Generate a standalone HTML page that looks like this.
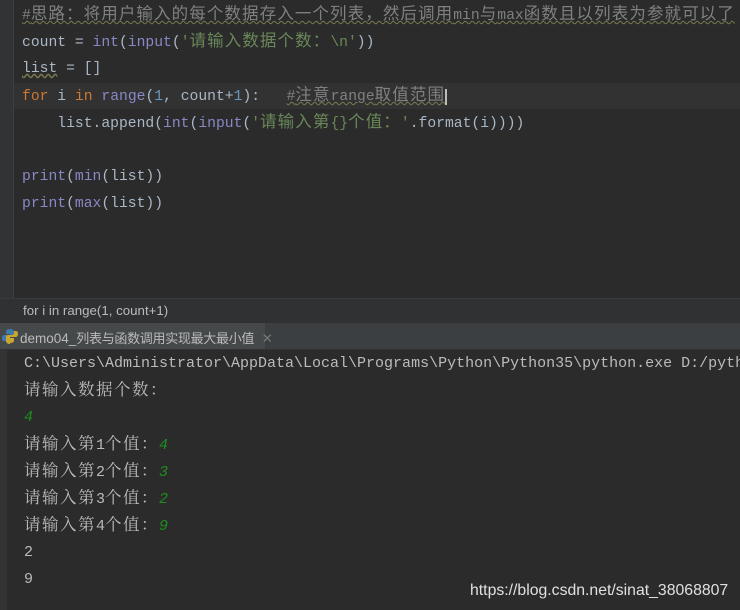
<!DOCTYPE html>
<html><head><meta charset="utf-8"><style>
body{margin:0;width:740px;height:610px;overflow:hidden;background:#2b2b2b;position:relative;font-family:"Liberation Mono","Noto Sans CJK SC",monospace}
.a{position:absolute;white-space:pre}
.code{font-size:14.7px;color:#a9b7c6;left:22px}
.z{font-size:16.5px;letter-spacing:1.1px}
.c{color:#808080;text-decoration:underline wavy #7a7a50;text-decoration-thickness:1px}
.k{color:#cc7832}.b{color:#8888c6}.s{color:#6a8759}.n{color:#6897bb}
.con{font-family:"Liberation Mono","Noto Serif CJK SC",monospace;font-size:15px;color:#bbbbbb;left:24px}
.con .z{font-size:16.5px;letter-spacing:1.5px}
.g{color:#1d8f1d;font-style:italic}
</style></head><body>
<div class="a" style="left:0;top:0;width:13px;height:298px;background:#313335;border-right:1px solid #3f3f3f"></div>
<div class="a" style="left:14px;top:83px;width:726px;height:26px;background:#323232"></div>
<div class="a code" style="top:5px;line-height:20px"><span class="c">#<span class="z">思路：将用户输入的每个数据存入一个列表，然后调用</span>min<span class="z">与</span>max<span class="z">函数且以列表为参就可以了</span></span></div>
<div class="a code" style="top:32px;line-height:20px">count = <span class="b">int</span>(<span class="b">input</span>(<span class="s">'<span class="z">请输入数据个数：</span>\n'</span>))</div>
<div class="a code" style="top:59px;line-height:20px"><span style="text-decoration:underline wavy #7a7a50">list</span> = []</div>
<div class="a code" style="top:86px;line-height:20px"><span class="k">for</span> i <span class="k">in</span> <span class="b">range</span>(<span class="n">1</span>, count+<span class="n">1</span>):   <span class="c">#<span class="z">注意</span>range<span class="z">取值范围</span></span><span style="border-left:2px solid #bbb"></span></div>
<div class="a code" style="top:113px;line-height:20px">    list.append(<span class="b">int</span>(<span class="b">input</span>(<span class="s">'<span class="z">请输入第</span>{}<span class="z">个值：</span>'</span>.format(i))))</div>
<div class="a code" style="top:167px;line-height:20px"><span class="b">print</span>(<span class="b">min</span>(list))</div>
<div class="a code" style="top:194px;line-height:20px"><span class="b">print</span>(<span class="b">max</span>(list))</div>
<div class="a" style="left:0;top:298px;width:740px;height:25px;background:#2f3133;border-top:1px solid #3a3a3a"></div>
<div class="a" style="left:23px;top:303px;font:13.3px 'Liberation Sans',sans-serif;color:#bbbbbb">for i in range(1, count+1)</div>
<div class="a" style="left:0;top:323px;width:740px;height:26px;background:#3c3f41;border-bottom:1px solid #323232"></div>
<div class="a" style="left:0;top:323px;width:265px;height:26px;background:#45494a"></div>
<svg class="a" style="left:2px;top:328px" width="16" height="16" viewBox="0 0 16 16"><path d="M8 1C4 1 4 3 4 4v2h4v1H2C0 7 0 10 0 10c0 3 2 3 2 3h2v-2c0-2 2-2 2-2h4s2 0 2-2V4c0-2-2-3-4-3z" fill="#3e7aab"/><path d="M8 15c4 0 4-2 4-3v-2H8V9h6c2 0 2-3 2-3 0-3-2-3-2-3h-2v2c0 2-2 2-2 2H6s-2 0-2 2v4c0 2 2 3 4 3z" fill="#c9a630"/></svg>
<div class="a" style="left:20px;top:328px;font:13.5px 'Liberation Sans',sans-serif;color:#bbbbbb">demo04_<span style="font:13px 'Noto Sans CJK SC',sans-serif;letter-spacing:-0.3px">列表与函数调用实现最大最小值</span>  <span style="color:#777">✕</span></div>
<div class="a" style="left:0;top:350px;width:7px;height:260px;background:#313335"></div>
<div class="a con" style="top:354px;line-height:20px">C:\Users\Administrator\AppData\Local\Programs\Python\Python35\python.exe D:/python</div>
<div class="a con" style="top:381px;line-height:20px"><span class="z">请输入数据个数：</span></div>
<div class="a con" style="top:408px;line-height:20px"><span class="g">4</span></div>
<div class="a con" style="top:435px;line-height:20px"><span class="z">请输入第</span>1<span class="z">个值：</span><span class="g">4</span></div>
<div class="a con" style="top:462px;line-height:20px"><span class="z">请输入第</span>2<span class="z">个值：</span><span class="g">3</span></div>
<div class="a con" style="top:489px;line-height:20px"><span class="z">请输入第</span>3<span class="z">个值：</span><span class="g">2</span></div>
<div class="a con" style="top:516px;line-height:20px"><span class="z">请输入第</span>4<span class="z">个值：</span><span class="g">9</span></div>
<div class="a con" style="top:543px;line-height:20px">2</div>
<div class="a con" style="top:570px;line-height:20px">9</div>
<div class="a" style="left:470px;top:582px;font:15.8px 'Liberation Sans',sans-serif;color:#e0e0e0">https://blog.csdn.net/sinat_38068807</div>
</body></html>
